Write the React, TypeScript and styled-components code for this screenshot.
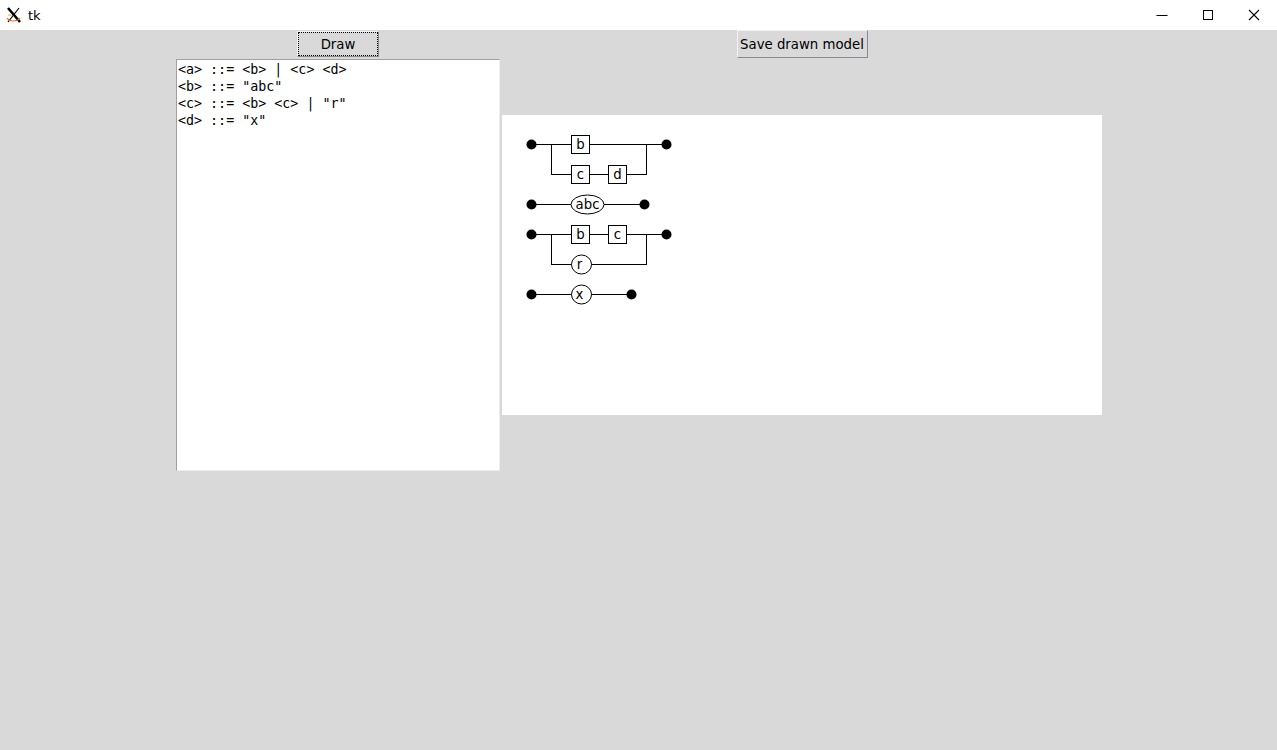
import { createGlobalStyle, styled } from "styled-components";

const grammar = [
  "<a> ::= <b> | <c> <d>",
  "<b> ::= \"abc\"",
  "<c> ::= <b> <c> | \"r\"",
  "<d> ::= \"x\"",
];

export default function App() {
  return (
    <>
      <GlobalStyle />
      <Window>
        <TitleBar>
          <AppTitle>
            <TkLogo />
            <span>tk</span>
          </AppTitle>
          <WindowControls>
            <ControlButton aria-label="minimize">
              <svg width="12" height="12" viewBox="0 0 12 12">
                <path d="M0.5 6.5h11" stroke="#000" strokeWidth="1" />
              </svg>
            </ControlButton>
            <ControlButton aria-label="maximize">
              <svg width="12" height="12" viewBox="0 0 12 12">
                <rect x="1.5" y="1.5" width="9" height="9" fill="none" stroke="#000" strokeWidth="1" />
              </svg>
            </ControlButton>
            <ControlButton aria-label="close">
              <svg width="12" height="12" viewBox="0 0 12 12">
                <path d="M1 1l10 10M11 1L1 11" stroke="#000" strokeWidth="1.1" />
              </svg>
            </ControlButton>
          </WindowControls>
        </TitleBar>

        <Layout>
          <TkButton $focused $top={1} $height={26} $width={82}>
            Draw
          </TkButton>
          <TkButton $height={28} $width={131}>
            Save drawn model
          </TkButton>

          <TextBox>
            {grammar.map((line, i) => (
              <TextLine key={i}>{line}</TextLine>
            ))}
          </TextBox>
          <Canvas>
            <Diagram />
          </Canvas>
        </Layout>
      </Window>
    </>
  );
}

function TkLogo() {
  return (
    <svg width="18" height="18" viewBox="0 0 18 18">
      <path d="M3 2 L15 16" stroke="#000" strokeWidth="2.6" />
      <path d="M14 2 L3 16" stroke="#000" strokeWidth="1.2" />
      <path d="M2 12 Q4 15 8 15 Q13 15 15 12" fill="none" stroke="#e0702a" strokeWidth="1.2" />
      <path d="M3 9 Q6 8 7 11" fill="none" stroke="#e89a5a" strokeWidth="1" />
    </svg>
  );
}

// railroad diagram drawn on the canvas

const Y = [29.5, 89.5, 119.5, 179.5];

function Box({ x, y, label }: { x: number; y: number; label: string }) {
  return (
    <g>
      <rect x={x} y={y - 9} width={18} height={18} fill="#fff" stroke="#000" />
      <Label x={x + 9} y={y}>
        {label}
      </Label>
    </g>
  );
}

function Dot({ x, y }: { x: number; y: number }) {
  return <circle cx={x} cy={y} r={5} fill="#000" />;
}

function Terminal({ cx, cy, rx, label }: { cx: number; cy: number; rx: number; label: string }) {
  return (
    <g>
      <ellipse cx={cx} cy={cy} rx={rx} ry={9.5} fill="#fff" stroke="#000" />
      <Label x={cx - (rx === 10 ? 2 : 0)} y={cy}>
        {label}
      </Label>
    </g>
  );
}

function Diagram() {
  return (
    <svg width="600" height="300" viewBox="0 0 600 300">
      <g stroke="#000" strokeWidth="1" fill="none" shapeRendering="crispEdges">
        {/* <a> */}
        <path d={`M29 ${Y[0]} H164.5`} />
        <path d={`M49.5 ${Y[0]} V59.5 H144.5 V${Y[0]}`} />
        {/* <b> */}
        <path d={`M29 ${Y[1]} H142`} />
        {/* <c> */}
        <path d={`M29 ${Y[2]} H164.5`} />
        <path d={`M49.5 ${Y[2]} V149.5 H144.5 V${Y[2]}`} />
        {/* <d> */}
        <path d={`M29 ${Y[3]} H129`} />
      </g>

      <Dot x={29.5} y={Y[0]} />
      <Dot x={164.5} y={Y[0]} />
      <Box x={69.5} y={Y[0]} label="b" />
      <Box x={69.5} y={59.5} label="c" />
      <Box x={106.5} y={59.5} label="d" />

      <Dot x={29.5} y={Y[1]} />
      <Dot x={142.5} y={Y[1]} />
      <Terminal cx={85.5} cy={Y[1]} rx={16.5} label="abc" />

      <Dot x={29.5} y={Y[2]} />
      <Dot x={164.5} y={Y[2]} />
      <Box x={69.5} y={Y[2]} label="b" />
      <Box x={106.5} y={Y[2]} label="c" />
      <Terminal cx={79.5} cy={149.5} rx={10} label="r" />

      <Dot x={29.5} y={Y[3]} />
      <Dot x={129.5} y={Y[3]} />
      <Terminal cx={79.5} cy={Y[3]} rx={10} label="x" />
    </svg>
  );
}

// STYLED COMPONENTS

const GlobalStyle = createGlobalStyle`
  html, body {
    margin: 0;
    padding: 0;
    background: #d9d9d9;
  }
  body {
    font-family: "DejaVu Sans", "Liberation Sans", sans-serif;
  }
`;

const Window = styled.div`
  width: 1277px;
  height: 750px;
  background: #d9d9d9;
  overflow: hidden;
`;

const TitleBar = styled.div`
  height: 30px;
  background: #fff;
  display: flex;
  align-items: center;
  justify-content: space-between;
`;

const AppTitle = styled.div`
  display: flex;
  align-items: center;
  gap: 5px;
  padding-left: 5px;
  font-size: 13px;
  color: #000;
`;

const WindowControls = styled.div`
  display: flex;
  height: 100%;
`;

const ControlButton = styled.div`
  width: 46px;
  height: 30px;
  display: flex;
  align-items: center;
  justify-content: center;
`;

const Layout = styled.div`
  display: grid;
  grid-template-columns: 324px 600px;
  grid-template-rows: 29px 412px;
  column-gap: 2px;
  justify-content: center;
  justify-items: center;
  align-items: center;
  padding-left: 1px;
`;

const TkButton = styled.div<{ $focused?: boolean; $top?: number; $height: number; $width: number }>`
  align-self: start;
  box-sizing: border-box;
  margin-top: ${(p) => p.$top ?? 0}px;
  width: ${(p) => p.$width}px;
  height: ${(p) => p.$height}px;
  display: flex;
  align-items: center;
  justify-content: center;
  font-size: 13.3px;
  color: #000;
  background: #d9d9d9;
  border: 1px solid;
  border-color: #f2f2f2 #8a8a8a #8a8a8a #f2f2f2;
  outline: ${(p) => (p.$focused ? "1px dotted #000" : "none")};
  outline-offset: -2px;
`;

const TextBox = styled.div`
  box-sizing: border-box;
  width: 324px;
  height: 412px;
  background: #fff;
  border: 1px solid;
  border-color: #a0a0a0 #ececec #ececec #a0a0a0;
  padding: 1px 1px;
  font-family: "DejaVu Sans Mono", "Liberation Mono", monospace;
  font-size: 13.33px;
  line-height: 17px;
  color: #000;
`;

const TextLine = styled.div`
  white-space: pre;
`;

const Canvas = styled.div`
  width: 600px;
  height: 300px;
  background: #fff;

  & svg {
    display: block;
  }
`;

const Label = styled.text`
  font-family: "DejaVu Sans", "Liberation Sans", sans-serif;
  font-size: 13.3px;
  text-anchor: middle;
  dominant-baseline: central;
  fill: #000;
`;
